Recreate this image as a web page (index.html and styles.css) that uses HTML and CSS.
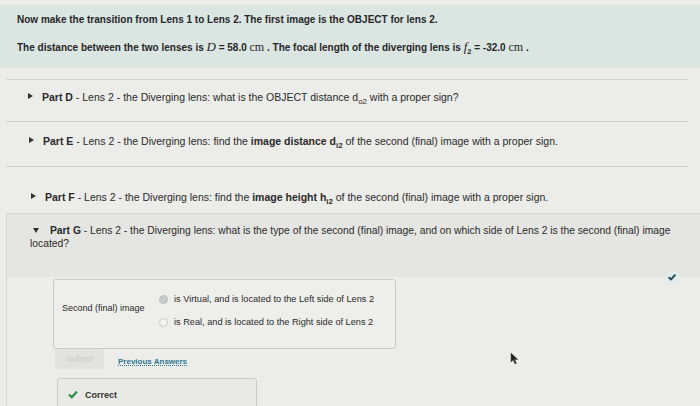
FILE: index.html
```html
<!DOCTYPE html>
<html>
<head>
  <title>Lens 2 - Diverging lens</title>
  <meta charset="UTF-8">
  <link rel="stylesheet" href="styles.css">
</head>
<body>
  <div class="intro">
    <p>Now make the transition from Lens 1 to Lens 2. The first image is the OBJECT for lens 2.</p>
    <p>The distance between the two lenses is <i class="var">D</i> = 58.0 <span class="unit">cm</span> . The focal length of the diverging lens is <i class="var">f</i><sub>2</sub> = -32.0 <span class="unit">cm</span> .</p>
  </div>

  <div class="part part-d">
    <span class="arrow"></span>
    <span><b>Part D</b> - Lens 2 - the Diverging lens: what is the OBJECT distance d<sub>o2</sub> with a proper sign?</span>
  </div>
  <div class="part part-e">
    <span class="arrow"></span>
    <span><b>Part E</b> - Lens 2 - the Diverging lens: find the <b>image distance d<sub>i2</sub></b> of the second (final) image with a proper sign.</span>
  </div>
  <div class="part part-f">
    <span class="arrow"></span>
    <span><b>Part F</b> - Lens 2 - the Diverging lens: find the <b>image height h<sub>i2</sub></b> of the second (final) image with a proper sign.</span>
  </div>

  <div class="open">
    <div class="open-head">
      <p><span class="arrow down"></span><b>Part G</b> - Lens 2 - the Diverging lens: what is the type of the second (final) image, and on which side of Lens 2 is the second (final) image located?</p>
      <svg class="done" width="14" height="14" viewBox="0 0 14 14"><circle cx="7" cy="7" r="7" fill="#dfecea"/><path d="M3.6 7.2 L6 9.4 L10.4 4.6" fill="none" stroke="#244a52" stroke-width="2"/></svg>
    </div>

    <div class="answer">
      <div class="label">Second (final) image</div>
      <div class="choices">
        <label class="choice"><span class="radio checked"></span>is Virtual, and is located to the Left side of Lens 2</label>
        <label class="choice"><span class="radio"></span>is Real, and is located to the Right side of Lens 2</label>
      </div>
    </div>

    <div class="actions">
      <button class="submit" disabled>Submit</button>
      <a class="prev" href="#">Previous Answers</a>
    </div>

    <div class="result">
      <svg width="10" height="9" viewBox="0 0 10 9"><path d="M1 4.6 L3.8 7.2 L9 1.4" fill="none" stroke="#2f8a4c" stroke-width="2.2"/></svg>
      <b>Correct</b>
    </div>
  </div>

  <svg class="pointer" width="9" height="13" viewBox="0 0 9 13"><path d="M1 1 L1 10 L3.2 8 L5 12 L6.4 11.3 L4.7 7.5 L7.8 7.4 Z" fill="#222" stroke="#555" stroke-width="0.6"/></svg>
</body>
</html>
```

FILE: styles.css
```css
body {
  margin:0;
  background:#ecece9;
  color:#2a2a2a;
  font-family:"Liberation Sans", Arial, sans-serif;
  font-size:10.5px;
  height:406px;
  overflow:hidden;
  position:relative;
}
p { margin:0; }
sub { font-size:0.75em; line-height:0; }

.intro{
  margin-top:5px;
  height:63px;
  box-sizing:border-box;
  padding:9px 17px 0;
  background:#dbe5e2;
  font-weight:bold;
  font-size:10px;
  color:#272727;
}
.intro p + p { margin-top:14px; }
.var { font-family:"Liberation Serif", serif; font-size:13px; font-weight:normal; }
.unit { font-family:"Liberation Serif", serif; font-size:12px; font-weight:normal; }

.part{
  display:flex;
  align-items:flex-start;
  gap:9px;
  margin:0 12px 0 6px;
  border-top:1px solid #d2d2cf;
  box-sizing:border-box;
}
.part-d { margin-top:11px; height:42px; padding:11px 0 0 22px; }
.part-e { height:45px; padding:13px 0 0 23px; }
.part-f { height:47px; padding:24px 0 0 25px; }

/* small caret triangles */
.arrow{
  display:inline-block;
  width:0; height:0;
  margin-top:2px;
  border-style:solid;
  border-width:3.5px 0 3.5px 5px;
  border-color:transparent transparent transparent #333;
}
.arrow.down{
  margin:0 11px 1px 0;
  border-width:5px 3.5px 0 3.5px;
  border-color:#333 transparent transparent transparent;
}

.open{
  margin-left:6px;
  border-left:1px solid #d6d6d3;
  border-top:1px solid #d2d2cf;
  height:200px;
}
.open-head{
  position:relative;
  background:#e5e5e2;
  height:63px;
  box-sizing:border-box;
  padding:11px 22px 0 23px;
  line-height:12.5px;
  font-size:10.3px;
}
.open-head p { text-indent:3px; }
.done { position:absolute; right:21px; bottom:-7px; }

.answer{
  margin:2px 0 0 46px;
  width:343px;
  height:70px;
  box-sizing:border-box;
  border:1px solid #c9c9c6;
  border-radius:3px;
  background:#eeeeeb;
  display:flex;
  align-items:flex-start;
  padding:14px 0 0 8px;
  font-size:9.2px;
}
.label { width:97px; padding-top:9px; font-size:9px; }
.choices { display:flex; flex-direction:column; gap:13px; }
.choice { display:flex; align-items:center; gap:6px; }
.radio{
  width:7px; height:7px;
  border:1px solid #c3c8c8;
  border-radius:50%;
  background:#f3f3f1;
}
.radio.checked { background:#c6cbcb; border-color:#b9bebe; }

.actions{
  display:flex;
  align-items:center;
  gap:14px;
  margin:0 0 0 48px;
}
.submit{
  width:49px; height:20px;
  border:0;
  border-radius:2px;
  background:#e2e2df;
  color:#cdcdca;
  font:8.5px "Liberation Sans", Arial, sans-serif;
}
.prev{
  color:#2d7793;
  font-weight:bold;
  font-size:8px;
  text-decoration:underline dotted;
  padding-top:5px;
}

.result{
  margin:9px 0 0 50px;
  width:200px;
  height:40px;
  box-sizing:border-box;
  border:1px solid #cacac7;
  border-radius:3px;
  background:#e9e9e6;
  display:flex;
  align-items:flex-start;
  gap:7px;
  padding:11px 0 0 10px;
  font-size:9px;
  color:#333;
}
.pointer { position:absolute; left:510px; top:352px; }
```
